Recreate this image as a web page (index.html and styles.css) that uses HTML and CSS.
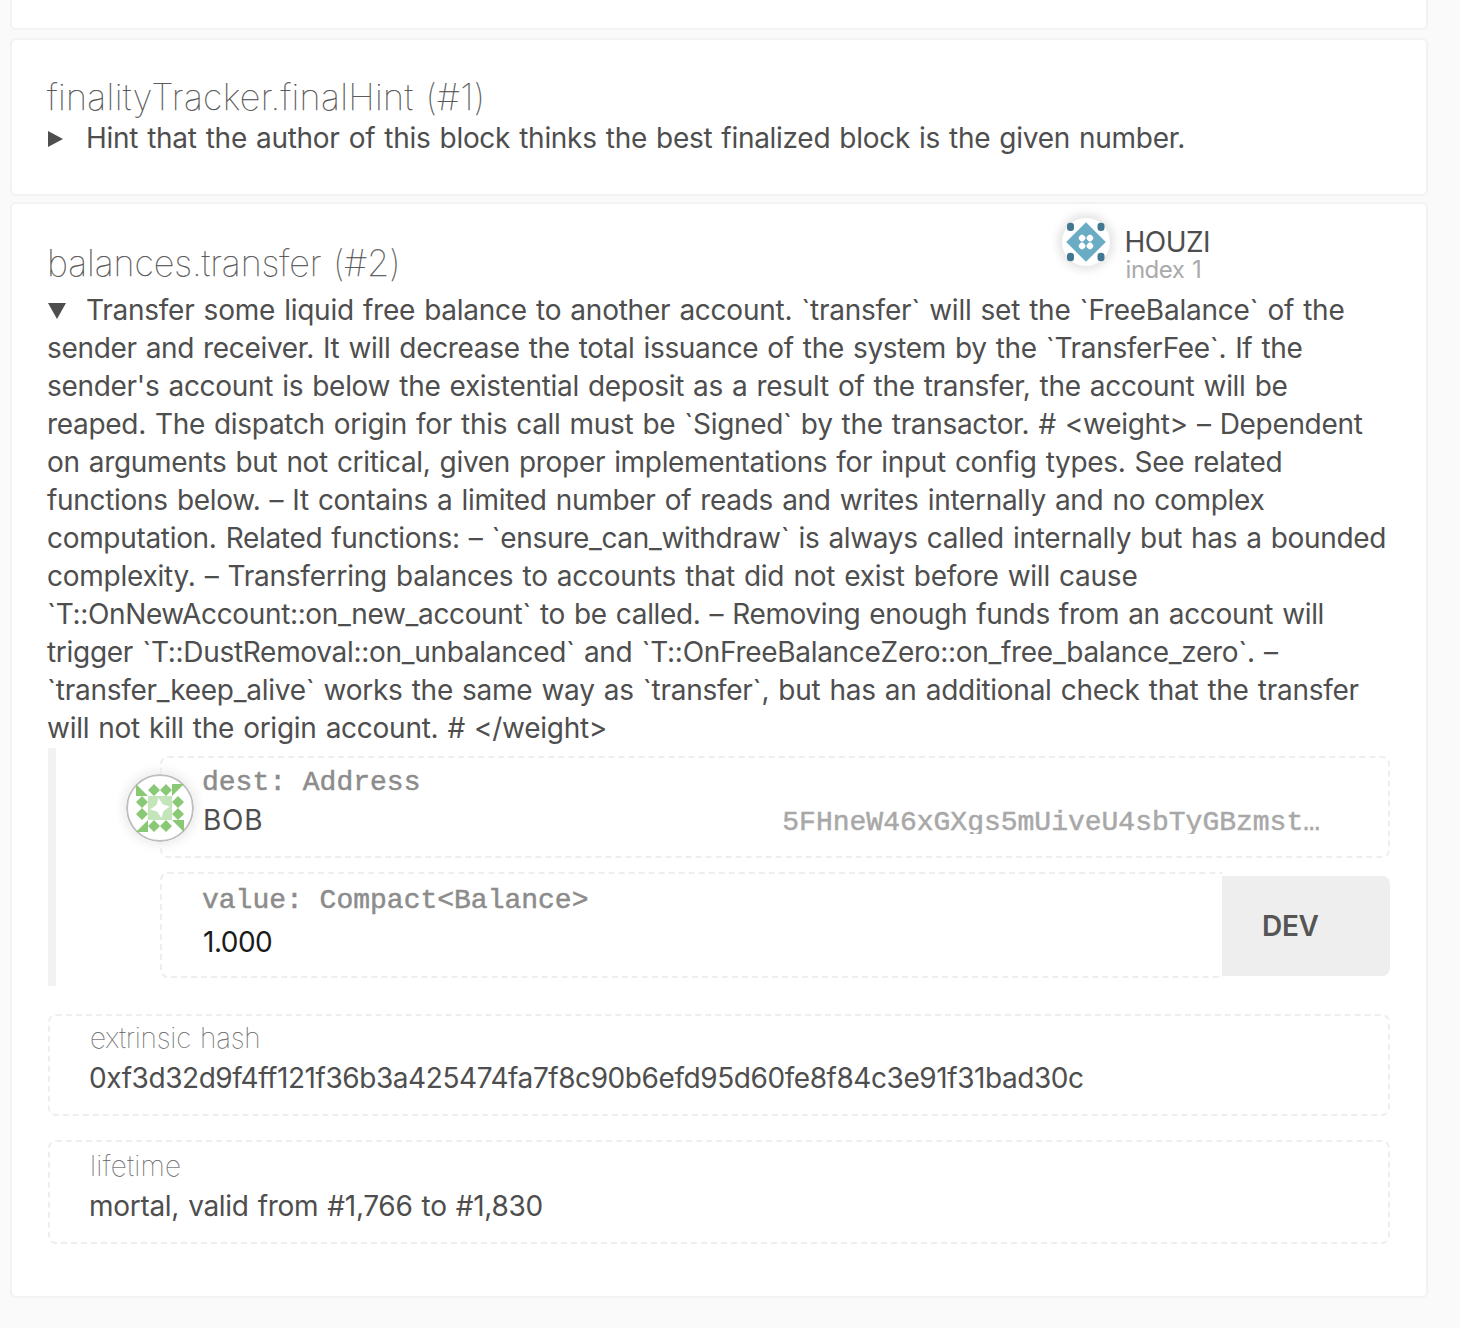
FILE: index.html
```html
<!DOCTYPE html>
<html lang="en">
<head>
<meta charset="utf-8">
<title>Extrinsics</title>
<link rel="stylesheet" href="styles.css">
</head>
<body>
<main class="extrinsics">
  <article class="card card-previous"></article>

  <article class="card card-collapsed">
    <h3 class="title title-first">finalityTracker.finalHint (#1)</h3>
    <div class="description"><span class="line"><svg class="marker" viewBox="0 0 18 18"><path d="M0 1 15 9 0 17Z"/></svg>Hint that the author of this block thinks the best finalized block is the given number.</span></div>
  </article>

  <article class="card">
    <header class="card-header">
      <h3 class="title">balances.transfer (#2)</h3>
      <div class="signer">
        <svg class="signer-icon" viewBox="-24 -24 48 48">
          <path fill="#6bacc5" d="M0-19.8 19.8 0 0 19.8-19.8 0Z"/>
          <g fill="#417791"><rect x="-19" y="-19.3" width="7" height="8.4" rx="3.3"/><rect x="11.5" y="-19.3" width="7" height="8.4" rx="3.3"/><rect x="-19" y="10.8" width="7" height="8.4" rx="3.3"/><rect x="11.5" y="10.8" width="7" height="8.4" rx="3.3"/></g>
          <path fill="#fff" d="M-5-7.2H-3L-.6-5V-3L-3-.6H-5L-7.2-3V-5ZM3-7.2H5L7.2-5V-3L5-.6H3L.6-3V-5ZM-5 .6H-3L-.6 3V5L-3 7.2H-5L-7.2 5V3ZM3 .6H5L7.2 3V5L5 7.2H3L.6 5V3Z"/>
        </svg>
        <div class="signer-text"><div class="signer-name">HOUZI</div><div class="signer-index">index 1</div></div>
      </div>
    </header>
    <div class="description description-full">
      <span class="line">Transfer some liquid free balance to another account. `transfer` will set the `FreeBalance` of the</span>
      <span class="line">sender and receiver. It will decrease the total issuance of the system by the `TransferFee`. If the</span>
      <span class="line">sender's account is below the existential deposit as a result of the transfer, the account will be</span>
      <span class="line">reaped. The dispatch origin for this call must be `Signed` by the transactor. # &lt;weight&gt; – Dependent</span>
      <span class="line">on arguments but not critical, given proper implementations for input config types. See related</span>
      <span class="line">functions below. – It contains a limited number of reads and writes internally and no complex</span>
      <span class="line">computation. Related functions: – `ensure_can_withdraw` is always called internally but has a bounded</span>
      <span class="line">complexity. – Transferring balances to accounts that did not exist before will cause</span>
      <span class="line">`T::OnNewAccount::on_new_account` to be called. – Removing enough funds from an account will</span>
      <span class="line">trigger `T::DustRemoval::on_unbalanced` and `T::OnFreeBalanceZero::on_free_balance_zero`. –</span>
      <span class="line">`transfer_keep_alive` works the same way as `transfer`, but has an additional check that the transfer</span>
      <span class="line">will not kill the origin account. # &lt;/weight&gt;</span>
    </div>

    <section class="params">
      <div class="field param-dest">
        <svg class="account-icon" viewBox="-34 -34 68 68">
          <circle r="33" fill="#fff" stroke="#bebebe" stroke-width="2"/>
          <path fill="#89c975" d="M-24-24-12-12H-24ZM12-24H24L12-12ZM12 12H24V24ZM-12 12V24H-24Z"/>
          <path fill="#89c975" d="M-6-24 0-18-6-12-12-18ZM6-24 12-18 6-12 0-18ZM-6 12 0 18-6 24-12 18ZM6 12 12 18 6 24 0 18ZM-18-12-12-6-18 0-24-6ZM-18 0-12 6-18 12-24 6ZM18-12 24-6 18 0 12-6ZM18 0 24 6 18 12 12 6Z"/>
          <path fill="#c4e4ba" d="M-12-12H12V12H-12Z"/>
          <path fill="#fff" d="M-1.5-10 3-3.5 10-1.5 3.5 3 1.5 10-3 3.5-10 1.5-3.5-3Z"/>
        </svg>
        <div class="label mono">dest: Address</div>
        <div class="account"><span class="account-name">BOB</span><span class="address">5FHneW46xGXgs5mUiveU4sbTyGBzmst…</span></div>
      </div>
      <div class="value-row">
        <div class="field param-value">
          <div class="label mono">value: Compact&lt;Balance&gt;</div>
          <div class="amount">1.000</div>
        </div>
        <div class="unit">DEV</div>
      </div>
    </section>

    <div class="field hash">
      <div class="label thin">extrinsic hash</div>
      <div class="value hash-value">0xf3d32d9f4ff121f36b3a425474fa7f8c90b6efd95d60fe8f84c3e91f31bad30c</div>
    </div>
    <div class="field lifetime">
      <div class="label thin thin-wide">lifetime</div>
      <div class="value">mortal, valid from #1,766 to #1,830</div>
    </div>
  </article>
</main>
</body>
</html>
```
FILE: styles.css
```css
* { box-sizing: border-box; }

body {
  margin: 0;
  background: #fafafa;
  color: #4e4e4e;
  font: 400 28px/38px Inter, sans-serif;
  word-spacing: 1.5px;
}

.extrinsics { padding: 0 32px 30px 10px; }

.card {
  border: 2px solid #f2f2f2;
  border-radius: 6px;
  background: #fff;
  padding: 0 36px 52px;
  height: 1096px;
}
.card-previous {
  height: 30px;
  padding: 0;
  border-top: 0;
  border-radius: 0 0 6px 6px;
  margin-bottom: 8px;
}
.card-collapsed { height: 158px; padding-top: 35px; margin-bottom: 6px; }

.title {
  margin: 0 0 0 -1px;
  font-size: 36px;
  font-weight: 100;
  line-height: 44px;
  letter-spacing: -.07px;
  -webkit-text-stroke: .25px #4e4e4e;
}
.title-first { letter-spacing: .33px; }

.card-header { display: flex; justify-content: space-between; height: 87px; padding-right: 180px; }
.card-header .title { padding-top: 37px; }

.signer { display: flex; gap: 15px; padding-top: 14px; }
.signer-icon {
  width: 48px;
  height: 48px;
  overflow: visible;
  border-radius: 50%;
  background: #fff;
  box-shadow: 0 0 10px 4px #e3e3e3;
}
.signer-name { line-height: 34px; padding-top: 7px; letter-spacing: -.55px; }
.signer-index {
  margin-left: 1px;
  font-size: 24px;
  line-height: 22px;
  letter-spacing: -.5px;
  color: #aaa;
}

.line { display: block; white-space: nowrap; letter-spacing: -.29px; }
.marker { width: 18px; height: 18px; margin: 2px 20px 0 0; fill: #4e4e4e; }
.card-collapsed .line { display: flex; align-items: center; }

.description-full { margin: 0 0 1px -1px; }
.description-full .line:nth-child(1) { letter-spacing: -.25px; }
.description-full .line:nth-child(2) { letter-spacing: -.338px; }
.description-full .line:nth-child(3) { letter-spacing: -.301px; }
.description-full .line:nth-child(4) { letter-spacing: -.313px; }
.description-full .line:nth-child(5) { letter-spacing: -.325px; }
.description-full .line:nth-child(6) { letter-spacing: -.301px; }
.description-full .line:nth-child(7) { letter-spacing: -.316px; }
.description-full .line:nth-child(8) { letter-spacing: -.249px; }
.description-full .line:nth-child(9) { letter-spacing: -.35px; }
.description-full .line:nth-child(10) { letter-spacing: -.295px; }
.description-full .line:nth-child(11) { letter-spacing: -.265px; }
.description-full .line:nth-child(12) { letter-spacing: -.27px; }
.description-full .line:first-child::before {
  content: "";
  display: inline-block;
  width: 18px;
  height: 16px;
  margin: 0 20px 0 1px;
  background: #4e4e4e;
  clip-path: polygon(0 0, 100% 0, 50% 100%);
  vertical-align: 1px;
}

.params {
  border-left: 8px solid #f2f2f2;
  padding: 8px 0 8px 104px;
  height: 238px;
  margin-bottom: 28px;
}

.field { border: 2px dashed #eee; border-radius: 8px; padding-left: 40px; }
.label { color: #8c8c8c; line-height: 40px; }
.mono {
  position: relative;
  top: 1px;
  margin-left: -1px;
  font-family: "Liberation Mono", monospace;
  word-spacing: 0;
  -webkit-text-stroke: .5px #8c8c8c;
}
.thin { color: #666; font-weight: 100; letter-spacing: -.2px; -webkit-text-stroke: .15px #666; }
.thin-wide { letter-spacing: .3px; }

.param-dest { position: relative; height: 102px; padding: 4px 68px 0 41px; margin-bottom: 14px; }
.account-icon {
  position: absolute;
  left: -36px;
  top: 16px;
  width: 68px;
  height: 68px;
  border-radius: 50%;
  box-shadow: 0 0 10px 4px #eee;
}
.account { display: flex; justify-content: space-between; line-height: 36px; }
.account-name { letter-spacing: .7px; }
.address {
  height: 32px;
  overflow: hidden;
  padding-top: 3px;
  color: #a8a8a8;
  font-family: "Liberation Mono", monospace;
  -webkit-text-stroke: .5px #a8a8a8;
}

.value-row { display: flex; height: 106px; }
.param-value { flex: 1; border-right: 0; border-radius: 8px 0 0 8px; padding: 6px 0 0 41px; }
.amount { line-height: 44px; letter-spacing: -.5px; color: #1b1b1b; }
.unit {
  width: 168px;
  height: 100px;
  margin-top: 4px;
  padding-left: 40px;
  border-radius: 0 8px 8px 0;
  background: #eee;
  color: #555;
  font-weight: 600;
  line-height: 100px;
  letter-spacing: -.3px;
}

.hash { height: 102px; padding-top: 2px; margin-bottom: 24px; }
.lifetime { height: 104px; padding-top: 4px; }
.value { margin-left: -1px; line-height: 40px; letter-spacing: -.3px; }
.hash-value { letter-spacing: -.43px; }
```
